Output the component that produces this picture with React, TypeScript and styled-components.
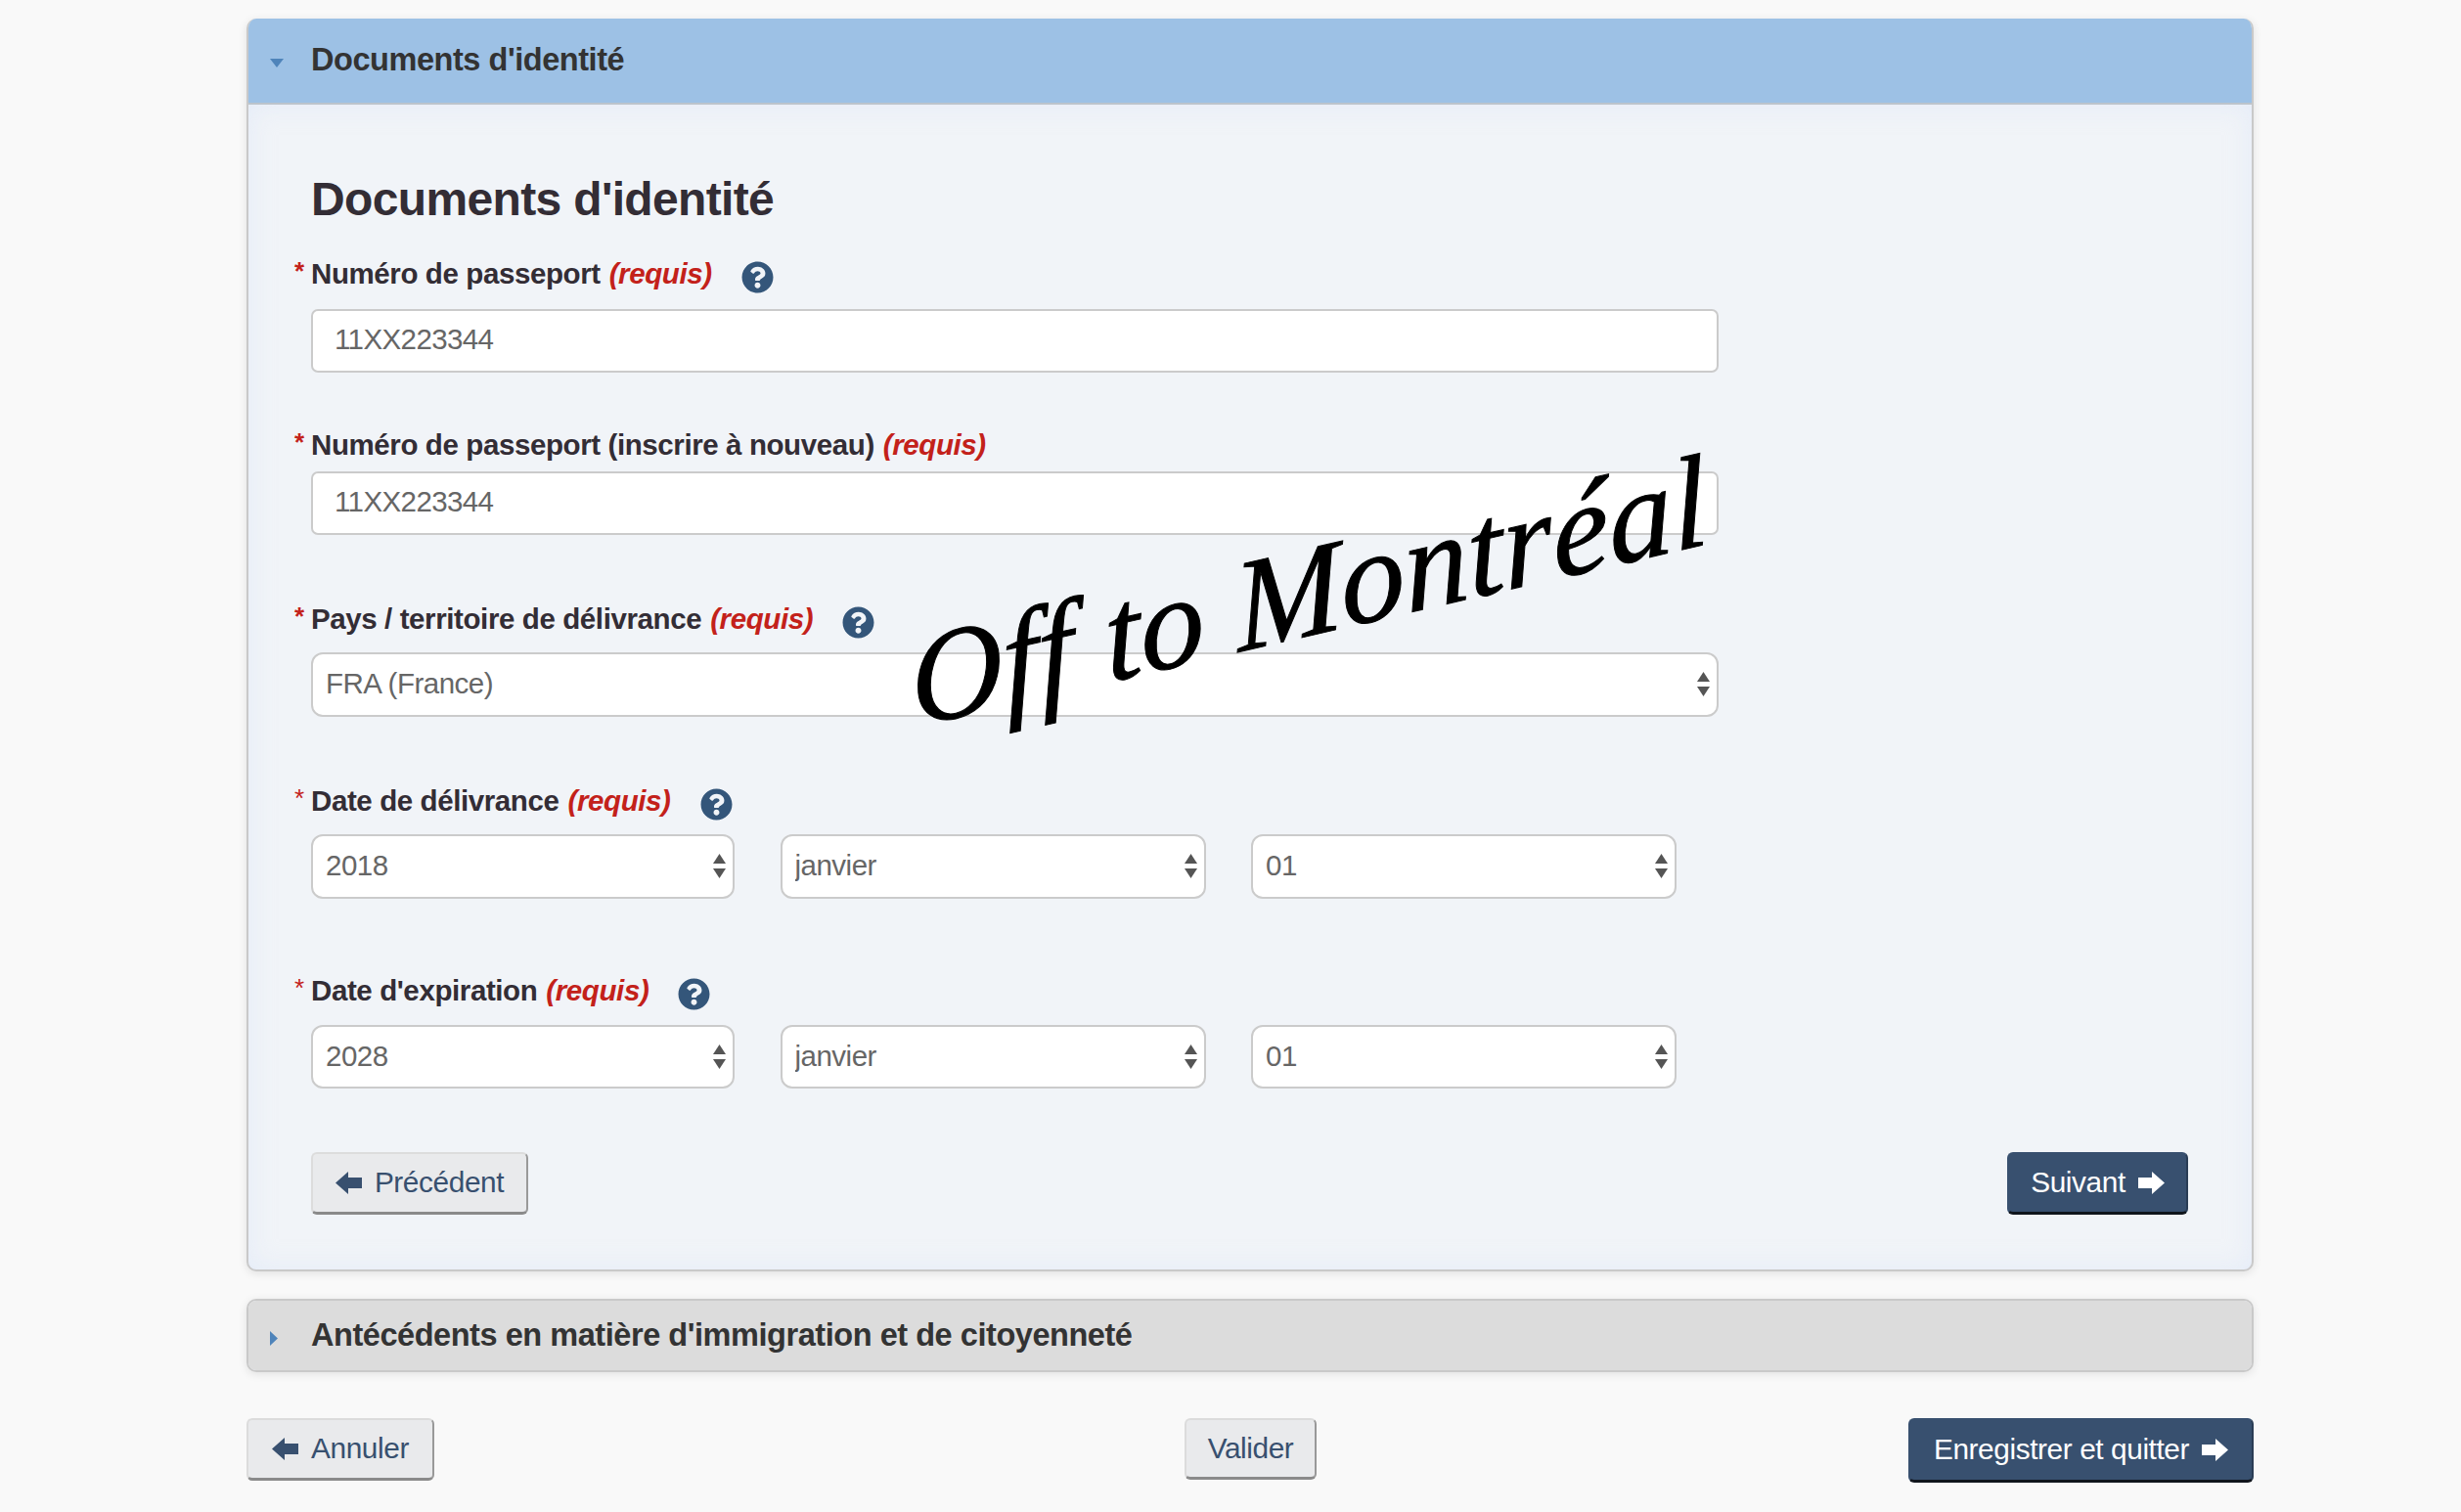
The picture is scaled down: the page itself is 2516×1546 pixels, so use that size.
import React from "react";
import styled, { createGlobalStyle } from "styled-components";
import { FaQuestionCircle } from "react-icons/fa";

const GlobalStyle = createGlobalStyle`
  html, body {
    margin: 0;
    padding: 0;
    background: #f9f9f9;
    font-family: "Liberation Sans", Arial, sans-serif;
    overflow: hidden;
  }
`;

const Page = styled.div`
  position: relative;
  width: 2052px;
  height: 1546px;
  margin-left: 252px;
  padding-top: 19px;
  box-sizing: border-box;
`;

const Panel = styled.section<{ $open?: boolean }>`
  border: 2px solid #c9c9c9;
  border-top-width: ${(p) => (p.$open ? "0" : "2px")};
  border-radius: 10px;
  overflow: hidden;
  box-shadow: 0 2px 10px rgba(0, 0, 0, 0.1);
  background: #f1f4f8;
`;

const PanelHeader = styled.header<{ $open?: boolean }>`
  display: flex;
  align-items: center;
  height: ${(p) => (p.$open ? "88px" : "71px")};
  padding-left: 22px;
  padding-bottom: ${(p) => (p.$open ? "2px" : "0")};
  box-sizing: border-box;
  background: ${(p) => (p.$open ? "#9dc1e5" : "#dcdcdc")};
  border-bottom: ${(p) => (p.$open ? "2px solid #bcc4cc" : "0")};
  color: #333;
  font-size: 32.5px;
  font-weight: bold;
  letter-spacing: -0.45px;
`;

const CaretSlot = styled.span`
  display: flex;
  justify-content: flex-start;
  align-items: center;
  width: 42px;
  flex: none;
  margin-top: 6px;
`;

const PanelBody = styled.div`
  padding: 67px 0 56px 64px;
  box-shadow: inset 0 0 26px rgba(215, 228, 250, 0.5);
`;

const Heading = styled.h2`
  margin: 0 0 28px;
  height: 60px;
  line-height: 60px;
  font-size: 48px;
  font-weight: bold;
  letter-spacing: -0.65px;
  color: #332d35;
`;

const Field = styled.div<{ $after: number }>`
  margin-bottom: ${(p) => p.$after}px;
`;

const Label = styled.div<{ $gap: number }>`
  position: relative;
  display: flex;
  align-items: center;
  height: 34px;
  box-sizing: border-box;
  padding-top: 2px;
  margin-bottom: ${(p) => p.$gap}px;
  font-size: 29.5px;
  font-weight: bold;
  letter-spacing: -0.4px;
  color: #332d35;
  white-space: pre;
`;

const Star = styled.span<{ $light?: boolean }>`
  position: absolute;
  left: -17px;
  top: 0;
  font-size: 26px;
  font-weight: ${(p) => (p.$light ? "normal" : "bold")};
  color: #c3211a;
`;

const Required = styled.em`
  margin-left: 9px;
  color: #c3211a;
  font-weight: bold;
  font-style: italic;
`;

const Help = styled.span`
  display: inline-flex;
  margin: 7px 0 0 30px;
  color: #34567a;
  font-size: 33px;
`;

const TextInput = styled.input`
  display: block;
  width: 1439px;
  height: 65px;
  box-sizing: border-box;
  padding: 0 22px 3px;
  border: 2px solid #cbcbcb;
  border-radius: 7px;
  background: #fff;
  color: #666;
  font-family: inherit;
  font-size: 29.5px;
  letter-spacing: -0.6px;
  outline: none;
`;

const SelectWrap = styled.div<{ $width: number; $height: number }>`
  position: relative;
  width: ${(p) => p.$width}px;
  height: ${(p) => p.$height}px;
`;

const Select = styled.select`
  display: block;
  width: 100%;
  height: 100%;
  box-sizing: border-box;
  padding: 0 13px 3px;
  border: 2px solid #cbcbcb;
  border-radius: 12px;
  background: #fff;
  color: #666;
  font-family: inherit;
  font-size: 29.5px;
  letter-spacing: -0.5px;
  appearance: none;
  outline: none;
`;

const Spinner = styled.svg`
  position: absolute;
  right: 9px;
  top: 50%;
  transform: translateY(-50%);
  pointer-events: none;
`;

const DateRow = styled.div`
  display: flex;
  justify-content: space-between;
  width: 1396px;
`;

const ButtonRow = styled.div`
  display: flex;
  justify-content: space-between;
  align-items: flex-start;
  margin-right: 65px;
`;

const Button = styled.button<{ $primary?: boolean; $width: number; $height?: number }>`
  display: inline-flex;
  align-items: center;
  justify-content: center;
  gap: 13px;
  width: ${(p) => p.$width}px;
  height: ${(p) => p.$height ?? 64}px;
  box-sizing: border-box;
  padding: 0 0 1px;
  border: 2px solid ${(p) => (p.$primary ? "#38506f" : "#dcdcdc")};
  border-right-color: ${(p) => (p.$primary ? "#2a3d55" : "#999")};
  border-bottom: 3px solid ${(p) => (p.$primary ? "#10151c" : "#8a8a8a")};
  border-radius: 6px;
  background: ${(p) => (p.$primary ? "#38506f" : "#e9eaec")};
  color: ${(p) => (p.$primary ? "#fff" : "#38506f")};
  font-family: inherit;
  font-size: 29.8px;
  letter-spacing: -0.4px;
`;

const FooterRow = styled.div`
  display: grid;
  grid-template-columns: 959px 134px 1fr;
  align-items: start;
  margin-top: 47px;
`;

const FooterEnd = styled.div`
  display: flex;
  justify-content: flex-end;
`;

const GreyPanel = styled(Panel)`
  margin-top: 28px;
`;

// the script lettering laid over the form
const Stamp = styled.div`
  position: absolute;
  left: 666px;
  top: 529px;
  width: 840px;
  text-align: center;
  transform: rotate(-13deg) skewX(-8deg);
  font-family: "Liberation Serif", serif;
  font-style: italic;
  font-size: 133px;
  line-height: 150px;
  -webkit-text-stroke: 1px #000;
  color: #000;
  white-space: nowrap;
  pointer-events: none;
`;

const ArrowLeft = () => (
  <svg width="27" height="23" viewBox="0 0 27 23">
    <polygon points="0,11.5 13,0 13,6 27,6 27,17 13,17 13,23" fill="#38506f" />
  </svg>
);

const ArrowRight = () => (
  <svg width="27" height="23" viewBox="0 0 27 23">
    <polygon points="27,11.5 14,0 14,6 0,6 0,17 14,17 14,23" fill="#fff" />
  </svg>
);

const CaretDown = () => (
  <svg width="14" height="9" viewBox="0 0 14 9">
    <polygon points="0,0 14,0 7,9" fill="#4f84ba" />
  </svg>
);

const CaretRight = () => (
  <svg width="8" height="15" viewBox="0 0 8 15">
    <polygon points="0,0 8,7.5 0,15" fill="#4f84ba" />
  </svg>
);

function Dropdown({ value, width, height }: { value: string; width: number; height: number }) {
  return (
    <SelectWrap $width={width} $height={height}>
      <Select defaultValue={value}>
        <option>{value}</option>
      </Select>
      <Spinner width="13" height="26" viewBox="0 0 13 26">
        <polygon points="6.5,0 13,10 0,10" fill="#555" />
        <polygon points="0,15 13,15 6.5,25" fill="#555" />
      </Spinner>
    </SelectWrap>
  );
}

function FieldLabel({ text, gap, light, help }: { text: string; gap: number; light?: boolean; help?: boolean }) {
  return (
    <Label $gap={gap}>
      <Star $light={light}>*</Star>
      {text}
      <Required>(requis)</Required>
      {help && (
        <Help>
          <FaQuestionCircle />
        </Help>
      )}
    </Label>
  );
}

export default function App() {
  return (
    <>
      <GlobalStyle />
      <Page>
        <Panel $open>
          <PanelHeader $open>
            <CaretSlot>
              <CaretDown />
            </CaretSlot>
            Documents d'identité
          </PanelHeader>
          <PanelBody>
            <Heading>Documents d'identité</Heading>

            <Field $after={56}>
              <FieldLabel text="Numéro de passeport" gap={20} help />
              <TextInput defaultValue="11XX223344" />
            </Field>

            <Field $after={68}>
              <FieldLabel text="Numéro de passeport (inscrire à nouveau)" gap={11} />
              <TextInput defaultValue="11XX223344" />
            </Field>

            <Field $after={68}>
              <FieldLabel text="Pays / territoire de délivrance" gap={18} help />
              <Dropdown value="FRA (France)" width={1439} height={66} />
            </Field>

            <Field $after={76}>
              <FieldLabel text="Date de délivrance" gap={18} light help />
              <DateRow>
                <Dropdown value="2018" width={433} height={66} />
                <Dropdown value="janvier" width={435} height={66} />
                <Dropdown value="01" width={435} height={66} />
              </DateRow>
            </Field>

            <Field $after={65}>
              <FieldLabel text="Date d'expiration" gap={19} light help />
              <DateRow>
                <Dropdown value="2028" width={433} height={65} />
                <Dropdown value="janvier" width={435} height={65} />
                <Dropdown value="01" width={435} height={65} />
              </DateRow>
            </Field>

            <ButtonRow>
              <Button $width={222}>
                <ArrowLeft />
                Précédent
              </Button>
              <Button $primary $width={185}>
                Suivant
                <ArrowRight />
              </Button>
            </ButtonRow>
          </PanelBody>
        </Panel>

        <GreyPanel>
          <PanelHeader>
            <CaretSlot>
              <CaretRight />
            </CaretSlot>
            Antécédents en matière d'immigration et de citoyenneté
          </PanelHeader>
        </GreyPanel>

        <FooterRow>
          <div>
            <Button $width={192}>
              <ArrowLeft />
              Annuler
            </Button>
          </div>
          <Button $width={135} $height={63}>
            Valider
          </Button>
          <FooterEnd>
            <Button $primary $width={353} $height={66}>
              Enregistrer et quitter
              <ArrowRight />
            </Button>
          </FooterEnd>
        </FooterRow>

        <Stamp>Off to Montréal</Stamp>
      </Page>
    </>
  );
}
